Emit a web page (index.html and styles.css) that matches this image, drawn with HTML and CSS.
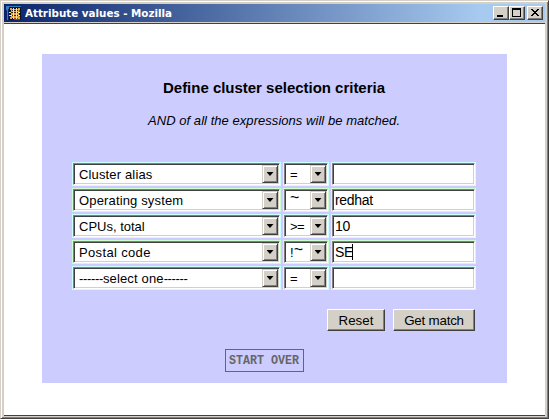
FILE: index.html
```html
<!DOCTYPE html>
<html lang="en">
<head>
<meta charset="utf-8">
<title>Attribute values - Mozilla</title>
<link rel="stylesheet" href="styles.css">
</head>
<body>
<div class="window">
  <header class="titlebar">
    <svg class="app-icon" width="16" height="16" viewBox="0 0 16 16" shape-rendering="crispEdges">
      <path fill="#347cc0" d="M0 1h15v1H3v2H2v11H1V5H0z"/>
      <path fill="#091329" d="M3 2h12v13H3z"/>
      <path fill="#a83c10" d="M8 10h6v5H8zM12 4h2v3h-2z"/>
      <path fill="#e9a43b" d="M4 3h2v2H4zM12 3h2v2h-2zM4 12h2v2H4zM12 12h2v2h-2zM5 4h8v9H5z"/>
      <path fill="#ffe49a" d="M7 3h1v11H7zM10 3h1v11h-1zM3 7h11v1H3zM3 10h11v1H3z"/>
      <path fill="#3a2814" d="M6 5h1v1H6zM8 5h2v1H8zM11 5h1v1h-1zM5 7h2v1H5zM8 7h2v1H8zM11 7h1v1h-1zM6 10h1v1H6zM8 10h2v1H8zM11 10h1v1h-1z"/>
    </svg>
    <svg class="title" width="200" height="18"><text x="0" y="13" textLength="147" lengthAdjust="spacingAndGlyphs">Attribute values - Mozilla</text></svg>
    <div class="controls">
      <span class="control"><svg width="12" height="10" shape-rendering="crispEdges"><path d="M2 7h6v2H2z"/></svg></span>
      <span class="control"><svg width="12" height="10" shape-rendering="crispEdges"><path fill-rule="evenodd" d="M1 0h9v9H1zM2 2v6h7V2z"/></svg></span>
      <span class="control close"><svg width="12" height="10" shape-rendering="crispEdges"><path d="M2 1h2v1h1v1h2V2h1V1h2v1H9v1H8v1H7v1h1v1h1v1h1v1H8V7H7V6H5v1H4v1H2V7h1V6h1V5h1V4H4V3H3V2H2z"/></svg></span>
    </div>
  </header>
  <main class="page">
    <section class="panel">
      <h1><svg width="240" height="20"><text x="9" y="15" textLength="222">Define cluster selection criteria</text></svg></h1>
      <p><svg width="270" height="20"><text x="9" y="14" textLength="252">AND of all the expressions will be matched.</text></svg></p>
      <div class="criteria">
        <div class="cell"><div class="field"><span>Cluster alias</span><i class="arrow"></i></div></div>
        <div class="cell"><div class="field"><span>=</span><i class="arrow"></i></div></div>
        <div class="cell"><div class="field text"></div></div>

        <div class="cell even"><div class="field"><span>Operating system</span><i class="arrow"></i></div></div>
        <div class="cell even"><div class="field"><span class="tilde">~</span><i class="arrow"></i></div></div>
        <div class="cell even"><div class="field text"><span>redhat</span></div></div>

        <div class="cell"><div class="field"><span class="cpus">CPUs, total</span><i class="arrow"></i></div></div>
        <div class="cell"><div class="field"><span class="gte">&gt;=</span><i class="arrow"></i></div></div>
        <div class="cell"><div class="field text"><span>10</span></div></div>

        <div class="cell even"><div class="field"><span class="postal">Postal code</span><i class="arrow"></i></div></div>
        <div class="cell even"><div class="field"><span>!<b class="tilde">~</b></span><i class="arrow"></i></div></div>
        <div class="cell even"><div class="field text"><span>SE</span><i class="caret"></i></div></div>

        <div class="cell"><div class="field"><span class="placeholder"><b>------</b>select one<b>------</b></span><i class="arrow"></i></div></div>
        <div class="cell"><div class="field"><span>=</span><i class="arrow"></i></div></div>
        <div class="cell"><div class="field text"></div></div>
      </div>
      <div class="actions">
        <button class="reset">Reset</button>
        <button class="match">Get match</button>
      </div>
      <div class="restart"><svg width="77" height="21"><text x="3" y="14" textLength="70" lengthAdjust="spacingAndGlyphs">START OVER</text></svg></div>
    </section>
  </main>
</div>
</body>
</html>
```
FILE: styles.css
```css
* { box-sizing: border-box; }
body {
  margin: 0;
  overflow: hidden;
  font: 13px/18px "Liberation Sans", Arial, sans-serif;
  color: #000;
}
svg { display: block; }
.window {
  width: 549px;
  height: 419px;
  padding: 2px;
  display: flex;
  flex-direction: column;
  background: #d4d0c8;
  border: 1px solid;
  border-color: #d4d0c8 #404040 #404040 #d4d0c8;
  box-shadow: inset 1px 1px #fff, inset -1px -1px #808080;
}
.titlebar {
  height: 18px;
  margin: 1px;
  padding: 0 2px;
  display: flex;
  align-items: center;
  background: linear-gradient(90deg, #0a246a, #a6caf0 88%);
}
.app-icon { margin: 0 3px 0 0; }
.title {
  overflow: visible;
  fill: #fff;
  font: bold 11px "DejaVu Sans", sans-serif;
}
.controls { display: flex; margin-left: auto; }
.control {
  width: 16px;
  height: 14px;
  padding: 1px;
  background: #d4d0c8;
  border: 1px solid;
  border-color: #fff #404040 #404040 #fff;
  box-shadow: inset -1px -1px #808080;
}
.close { margin-left: 2px; }
.page {
  flex: 1;
  margin: 0 1px;
  padding: 30px 38px;
  background: #fff;
  border-top: 1px solid #40404c;
  border-bottom: 1px solid #404048;
}
.panel {
  width: 465px;
  height: 329px;
  padding: 24px 32px 0 30px;
  background: #ccf;
}
h1, p { margin: 0 0 0 1px; display: flex; justify-content: center; }
h1 { font-size: 15px; height: 20px; }
p { margin-top: 13px; font-size: 13px; font-style: italic; height: 20px; }
.criteria {
  margin-top: 31px;
  display: grid;
  grid-template-columns: 209px 46px 145px;
  gap: 2px;
}
.cell { height: 24px; padding: 1px; background: #cff; }
.cell.even { background: #cfc; }
.field {
  height: 22px;
  display: flex;
  justify-content: space-between;
  padding: 1px 1px 1px 5px;
  background: #fff;
  border: 1px solid;
  border-color: #808080 #fff #fff #808080;
  box-shadow: inset 1px 1px #404040, inset -1px -1px #d4d0c8;
  white-space: nowrap;
}
.field span { height: 18px; line-height: 19px; letter-spacing: 0.15px; }
.field .cpus { letter-spacing: 0; }
.field .postal { letter-spacing: 0.35px; }
.field .gte { letter-spacing: -0.5px; }
.field.text { justify-content: flex-start; padding-left: 2px; font-size: 14px; }
.field.text span { letter-spacing: -0.3px; }
.field .tilde { font-size: 16px; font-weight: normal; line-height: 13px; }
.field b.tilde { vertical-align: 2px; }
.placeholder b { font-weight: normal; letter-spacing: -0.35px; }
.arrow {
  width: 16px;
  height: 18px;
  display: grid;
  place-items: center;
  background: #d4d0c8;
  border: 1px solid;
  border-color: #d4d0c8 #404040 #404040 #d4d0c8;
  box-shadow: inset 1px 1px #fff, inset -1px -1px #808080;
}
.arrow::after {
  content: "";
  width: 7px;
  height: 4px;
  background: #000;
  clip-path: polygon(0 0, 100% 0, 50% 100%);
}
.caret { width: 1px; height: 16px; margin-top: 1px; margin-left: -1px; background: #000; }
.actions {
  margin-top: 19px;
  display: flex;
  justify-content: flex-end;
  gap: 8px;
}
button {
  height: 22px;
  padding: 1px 0 0;
  font: 13.33px/18px "Liberation Sans", Arial, sans-serif;
  color: #000;
  background: #d4d0c8;
  border: 1px solid;
  border-color: #fff #404040 #404040 #fff;
  box-shadow: inset -1px -1px #808080;
}
.reset { width: 58px; }
.match { width: 82px; letter-spacing: -0.2px; }
.restart {
  width: 79px;
  height: 23px;
  margin: 18px 0 0 153px;
  border: 1px solid #666;
  fill: #666;
  font: bold 12px "Liberation Mono", monospace;
}
```
